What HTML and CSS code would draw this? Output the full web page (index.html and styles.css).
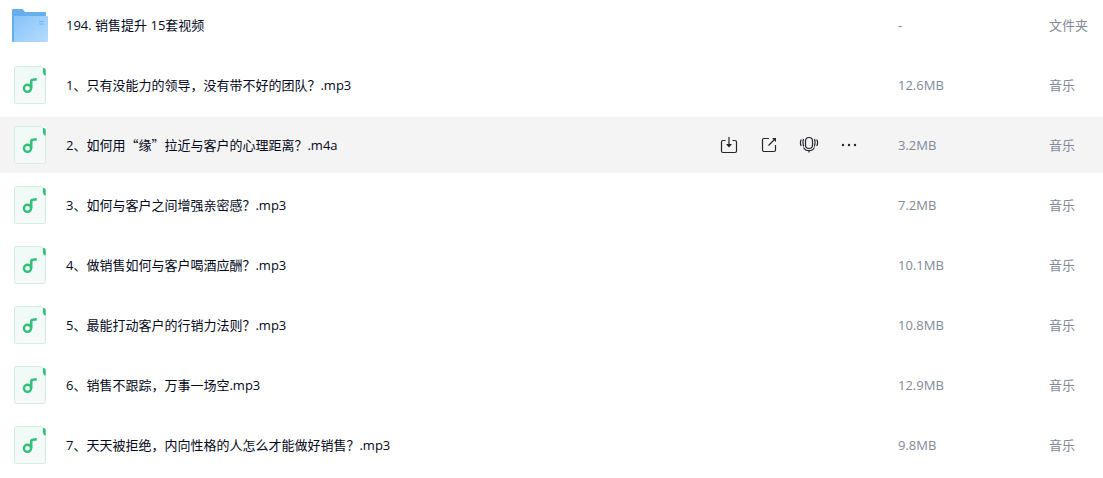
FILE: index.html
```html
<!DOCTYPE html>
<html lang="zh-CN">
<head>
    <meta charset="UTF-8">
    <meta name="viewport" content="width=device-width, initial-scale=1.0">
    <title>文件列表</title>
    <link rel="stylesheet" href="styles.css">
</head>
<body>
    <svg class="sprite" aria-hidden="true">
        <defs>
            <linearGradient id="folderFront" x1="0" y1="0" x2="1" y2="1">
                <stop offset="0" stop-color="#86c3f8"/>
                <stop offset="0.5" stop-color="#9dcffb"/>
                <stop offset="1" stop-color="#b8dcfe"/>
            </linearGradient>
            <linearGradient id="paper" x1="0" y1="0" x2="0" y2="1">
                <stop offset="0" stop-color="#effaf5"/>
                <stop offset="1" stop-color="#f6fafa"/>
            </linearGradient>
        </defs>
        <symbol id="icon-music" viewBox="0 0 36 40">
            <rect x="2.5" y="1.5" width="31" height="37" rx="2" fill="url(#paper)" stroke="#d3eee1"/>
            <path d="M29 1H35V11H33L31 9V3Z" fill="#fff"/>
            <path d="M29 1.5Q31 1.500 31 3.500V8" fill="none" stroke="#d3eee1"/>
            <path d="M31 3H32Q33.800 3.500 33.800 5.500V10.800Q31 10 31 7.500Z" fill="#35be79"/>
            <path d="M33.5 11V14" stroke="#d3eee1"/>
            <circle cx="15.5" cy="23.3" r="3.6" fill="none" stroke="#32c07a" stroke-width="2.4"/>
            <path d="M19.200 23.300V16.300Q19.200 14.700 21 14.700L24.800 14.200" fill="none" stroke="#32c07a" stroke-width="2.600"/>
        </symbol>
    </svg>

    <table class="file-list">
        <colgroup>
            <col>
            <col class="col-actions">
            <col class="col-size">
            <col class="col-type">
        </colgroup>
        <tbody>
            <tr>
                <td>
                    <div class="file-name">
                        <svg class="file-icon" viewBox="0 0 36 40" aria-hidden="true">
                            <path d="M0 5Q0 4 1 4H10.5L13 7H33Q34 7 34 8V37H1Q0 37 0 36Z" fill="#67afec"/>
                            <path d="M2 11H35Q36 11 36 12V35.5Q36 37 34.5 37H2Z" fill="url(#folderFront)"/>
                            <path d="M27 16.500H32M27 19H32" stroke="#6eb5f1"/>
                        </svg>
                        <a href="#">194. 销售提升 15套视频</a>
                    </div>
                </td>
                <td></td>
                <td class="meta">-</td>
                <td class="meta">文件夹</td>
            </tr>
            <tr>
                <td>
                    <div class="file-name">
                        <svg class="file-icon" aria-hidden="true"><use href="#icon-music"/></svg>
                        <a href="#">1、只有没能力的领导，没有带不好的团队？.mp3</a>
                    </div>
                </td>
                <td></td>
                <td class="meta">12.6MB</td>
                <td class="meta">音乐</td>
            </tr>
            <tr class="active">
                <td>
                    <div class="file-name">
                        <svg class="file-icon" aria-hidden="true"><use href="#icon-music"/></svg>
                        <a href="#">2、如何用<span class="quote">“缘”</span>拉近与客户的心理距离？.m4a</a>
                    </div>
                </td>
                <td>
                    <div class="actions">
                        <button type="button" aria-label="下载">
                            <svg viewBox="0 0 20 20">
                                <path d="M6.500 5.500H4Q2.500 5.500 2.500 7V16Q2.500 17.500 4 17.500H16Q17.500 17.500 17.500 16V7Q17.500 5.500 16 5.500H13.500M10 2V11"/>
                                <path class="solid" d="M7 9H13L10 12.500Z"/>
                            </svg>
                        </button>
                        <button type="button" aria-label="分享">
                            <svg viewBox="0 0 20 20">
                                <path d="M10 3.500H5Q3.500 3.500 3.500 5V15Q3.500 16.500 5 16.500H15Q16.500 16.500 16.500 15V10M9.500 10.500L15.500 4.500"/>
                                <path class="solid" d="M13 3H17V7Z"/>
                            </svg>
                        </button>
                        <button type="button" aria-label="语音">
                            <svg viewBox="0 0 20 20">
                                <rect x="6.500" y="2.500" width="7" height="11" rx="3.500"/>
                                <path d="M4.500 4Q3.300 8 4.800 11.500M2.300 4.500Q0.500 8 2.300 11M15.500 4Q16.700 8 15.200 11.500M17.700 4.500Q19.500 8 17.700 11M4.500 12.500Q6.300 15.700 10 15.700T15.500 12.500M10 15.500V17.500"/>
                            </svg>
                        </button>
                        <button type="button" aria-label="更多">
                            <svg viewBox="0 0 20 20">
                                <circle class="solid" cx="4" cy="10" r="1.200"/>
                                <circle class="solid" cx="10" cy="10" r="1.200"/>
                                <circle class="solid" cx="16" cy="10" r="1.200"/>
                            </svg>
                        </button>
                    </div>
                </td>
                <td class="meta">3.2MB</td>
                <td class="meta">音乐</td>
            </tr>
            <tr>
                <td>
                    <div class="file-name">
                        <svg class="file-icon" aria-hidden="true"><use href="#icon-music"/></svg>
                        <a href="#">3、如何与客户之间增强亲密感？.mp3</a>
                    </div>
                </td>
                <td></td>
                <td class="meta">7.2MB</td>
                <td class="meta">音乐</td>
            </tr>
            <tr>
                <td>
                    <div class="file-name">
                        <svg class="file-icon" aria-hidden="true"><use href="#icon-music"/></svg>
                        <a href="#">4、做销售如何与客户喝酒应酬？.mp3</a>
                    </div>
                </td>
                <td></td>
                <td class="meta">10.1MB</td>
                <td class="meta">音乐</td>
            </tr>
            <tr>
                <td>
                    <div class="file-name">
                        <svg class="file-icon" aria-hidden="true"><use href="#icon-music"/></svg>
                        <a href="#">5、最能打动客户的行销力法则？.mp3</a>
                    </div>
                </td>
                <td></td>
                <td class="meta">10.8MB</td>
                <td class="meta">音乐</td>
            </tr>
            <tr>
                <td>
                    <div class="file-name">
                        <svg class="file-icon" aria-hidden="true"><use href="#icon-music"/></svg>
                        <a href="#">6、销售不跟踪，万事一场空.mp3</a>
                    </div>
                </td>
                <td></td>
                <td class="meta">12.9MB</td>
                <td class="meta">音乐</td>
            </tr>
            <tr>
                <td>
                    <div class="file-name">
                        <svg class="file-icon" aria-hidden="true"><use href="#icon-music"/></svg>
                        <a href="#">7、天天被拒绝，内向性格的人怎么才能做好销售？.mp3</a>
                    </div>
                </td>
                <td></td>
                <td class="meta">9.8MB</td>
                <td class="meta">音乐</td>
            </tr>
        </tbody>
    </table>
</body>
</html>
```
FILE: styles.css
```css
body {
    margin: 0;
    background: #fff;
    color: #03081a;
    font-family: "Open Sans", "Noto Sans CJK SC", sans-serif;
    font-size: 13px;
    line-height: 20px;
}

.sprite {
    display: block;
    width: 0;
    height: 0;
}

.file-list {
    width: 100%;
    margin-top: -7px;
    table-layout: fixed;
    border-spacing: 0 4px;
}

.col-actions {
    width: 179px;
}

.col-size {
    width: 151px;
}

.col-type {
    width: 54px;
}

.file-list td {
    height: 56px;
    padding: 0;
    white-space: nowrap;
}

.active td {
    background: #f4f4f4;
}

.file-name {
    display: flex;
    align-items: center;
    gap: 18px;
    padding-left: 12px;
}

.file-name a {
    overflow: hidden;
    color: inherit;
    text-decoration: none;
    text-overflow: ellipsis;
}

.file-icon {
    flex: none;
    width: 36px;
    height: 40px;
}

.quote {
    font-family: "Noto Sans CJK SC", sans-serif;
}

.file-list .meta {
    color: #818999;
}

.actions {
    display: flex;
    gap: 20px;
}

.actions button {
    width: 20px;
    height: 20px;
    padding: 0;
    border: none;
    background: none;
    cursor: pointer;
}

.actions svg {
    display: block;
    width: 20px;
    height: 20px;
    fill: none;
    stroke: #25262b;
    stroke-width: 1.2;
}

.actions .solid {
    fill: #25262b;
    stroke: none;
}
```
